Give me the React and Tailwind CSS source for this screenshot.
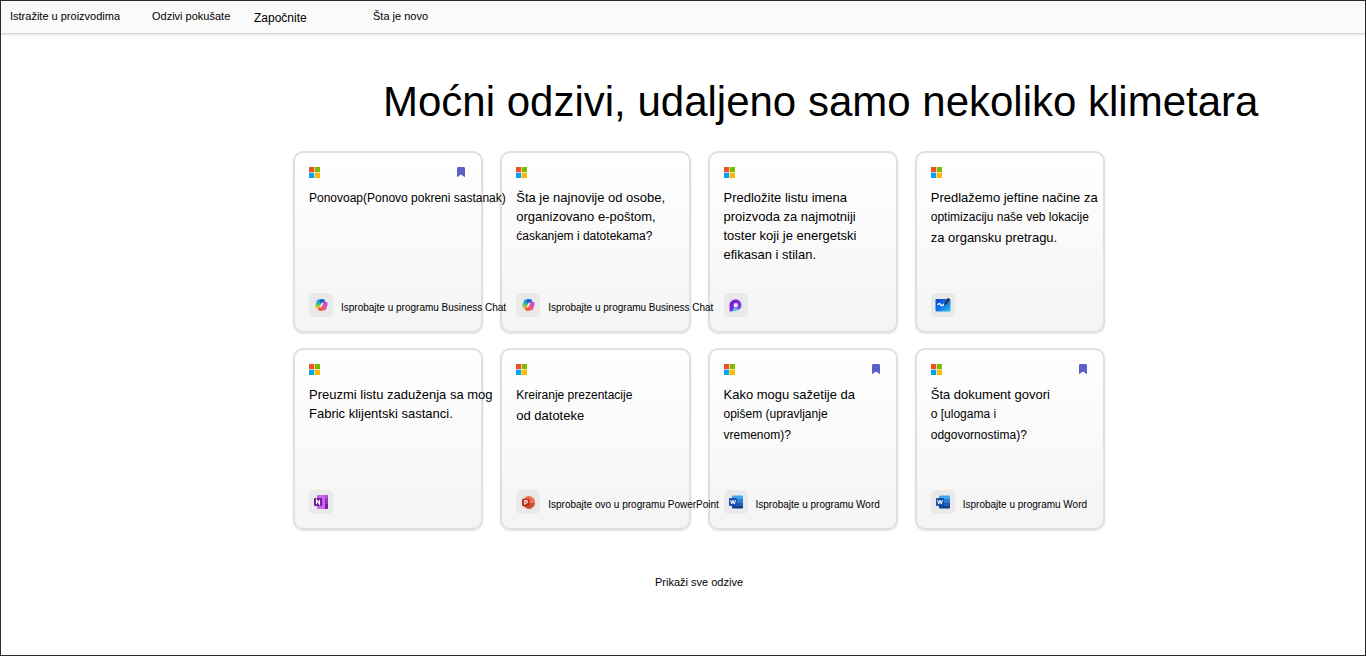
import React from "react";

function MicrosoftLogo() {
  return (
    <svg viewBox="0 0 11 11" className="size-[11px]" role="img" aria-label="Microsoft">
      <path fill="#f25022" d="M0 0h5.2v5.2H0z" />
      <path fill="#7fba00" d="M5.8 0H11v5.2H5.8z" />
      <path fill="#00a4ef" d="M0 5.8h5.2V11H0z" />
      <path fill="#ffb900" d="M5.8 5.8H11V11H5.8z" />
    </svg>
  );
}

function BookmarkIcon() {
  return (
    <svg viewBox="0 0 8 10" className="h-[10px] w-2" aria-hidden="true">
      <path fill="#5b5fc7" d="M1.4 0h5.2Q8 0 8 1.4V9.5q0 .8-.7.3L4 7.4.7 9.8Q0 10.3 0 9.5V1.4Q0 0 1.4 0z" />
    </svg>
  );
}

function CopilotIcon() {
  return (
    <svg viewBox="0 0 24 22" className="h-3 w-[13px]" aria-hidden="true">
      <defs>
        <linearGradient id="cp-a" x1="0" y1="0" x2="0" y2="1">
          <stop offset="0" stopColor="#1a8fe8" />
          <stop offset=".45" stopColor="#2bb7a0" />
          <stop offset=".75" stopColor="#a5cc36" />
          <stop offset="1" stopColor="#f5c518" />
        </linearGradient>
        <linearGradient id="cp-b" x1="1" y1="0" x2="0" y2="1">
          <stop offset="0" stopColor="#a153e8" />
          <stop offset=".5" stopColor="#ec4f9c" />
          <stop offset="1" stopColor="#ff8a3c" />
        </linearGradient>
      </defs>
      <path fill="url(#cp-a)" d="M7 1h10l-4 6h-1.500L8.500 17H4.500C1 17 0 14.500 1 11.500L3 5c.7-2.500 2-4 4-4z" />
      <path fill="#1a5fd0" d="M9 .5h6.500C17.500.5 18 2 18.500 4l.8 2.500H14c-2 0-2.500 1-3 2.500L8.500 6z" />
      <path fill="url(#cp-b)" d="M17 21H8l3-6h1.500l3-10h4C23 5 24 7.500 23 10.500L21 17c-.7 2.500-2 4-4 4z" />
      <path fill="#f15a3a" d="M14 21.500H8.500c-2 0-2.500-1-3-3.500l-.8-2H10c2 0 2.500-1 3-2.500l2 2.500z" />
    </svg>
  );
}

function DesignerIcon() {
  return (
    <svg viewBox="0 0 24 24" className="size-[13px]" aria-hidden="true">
      <defs>
        <linearGradient id="ds-a" x1="0" y1="0" x2="1" y2="1">
          <stop offset="0" stopColor="#5a17c8" />
          <stop offset=".55" stopColor="#8a2be2" />
          <stop offset="1" stopColor="#6a5cf0" />
        </linearGradient>
      </defs>
      <path
        fill="url(#ds-a)"
        fillRule="evenodd"
        d="M12.500 1C19 1 23 5.500 23 11.500S18.500 21 12 21l-9 2c-1.500 0-2-.8-2-2V12C1 5.500 6 1 12.500 1zm0 6.500a4 4 0 1 0 0 8 4 4 0 0 0 0-8z"
      />
      <path fill="#45c8f5" d="M9.500 15.500c3 1 6 1 8.500 3.500-2 1.800-4 2.500-7 2.800L4 23c2.500-1 4-3.500 5.500-7.500z" />
    </svg>
  );
}

function WhiteboardIcon() {
  return (
    <svg viewBox="0 0 16 16" className="size-4" aria-hidden="true">
      <defs>
        <linearGradient id="wb-a" x1="0" y1="0" x2="1" y2="1">
          <stop offset="0" stopColor="#0b3fd0" />
          <stop offset=".5" stopColor="#1273e8" />
          <stop offset="1" stopColor="#27c9f0" />
        </linearGradient>
      </defs>
      <rect x=".5" y="2" width="15" height="12.5" rx="1" fill="url(#wb-a)" />
      <path fill="none" stroke="#fff" strokeWidth="1.3" strokeLinecap="round" d="M3 7.500c1.600-1.800 2.200-.5 3 .5s1.800.8 3-.8" />
      <path fill="#2f3033" d="M9 8.500l.6-2.300L13 .8l2 1.500-3.600 5z" />
    </svg>
  );
}

function OneNoteIcon() {
  return (
    <svg viewBox="0 0 14 14" className="size-[14px]" aria-hidden="true">
      <rect x="3" y="0" width="11" height="14" rx="1" fill="#ca64ea" />
      <path fill="#ae4bd5" d="M11 0h2q1 0 1 1v3h-3z" />
      <path fill="#9332bf" d="M11 4h3v5h-3z" />
      <path fill="#7719aa" d="M11 9h3v4q0 1-1 1h-2z" />
      <rect x="0" y="3" width="8" height="8" rx=".8" fill="#6b1a9c" />
      <path fill="none" stroke="#fff" strokeWidth="1.2" d="M2.500 9.200V4.900l3 4.200V4.800" />
    </svg>
  );
}

function PowerPointIcon() {
  return (
    <svg viewBox="0 0 14 14" className="size-[13px]" aria-hidden="true">
      <path fill="#ed6c47" d="M7.500 0v7H1A6.600 6.600 0 0 1 7.500 0z" />
      <path fill="#ec7450" d="M7.500 0A6.800 6.800 0 0 1 14 7H7.500z" />
      <path fill="#d35230" d="M1 7h13A6.700 6.700 0 0 1 7.500 14 6.700 6.700 0 0 1 1 7z" />
      <rect x="0" y="3" width="8" height="8" rx=".8" fill="#b7341c" />
      <path fill="none" stroke="#fff" strokeWidth="1.1" d="M3 9.500V4.800h1.400q1.500 0 1.500 1.400T4.300 7.700H3" />
    </svg>
  );
}

function WordIcon() {
  return (
    <svg viewBox="0 0 14 14" className="size-[14px]" aria-hidden="true">
      <path fill="#41a5ee" d="M4 .5h9q1 0 1 1V4H3V1.500q0-1 1-1z" />
      <path fill="#2b7cd3" d="M3 4h11v3.200H3z" />
      <path fill="#185abd" d="M3 7.200h11v3H3z" />
      <path fill="#103f91" d="M3 10.200h11v2.300q0 1-1 1H4q-1 0-1-1z" />
      <rect x="0" y="3" width="8" height="8" rx=".8" fill="#1850b0" />
      <path fill="none" stroke="#fff" strokeWidth="1" d="M1.600 5l1.100 4L4 5.300 5.300 9l1.100-4" />
    </svg>
  );
}

const base = "text-[13px] leading-[19px]";
const small = "text-[12px] leading-[21px]";

const cards = [
  {
    lines: [["Ponovoap(Ponovo pokreni sastanak)", small]],
    icon: CopilotIcon, app: "Business Chat", action: "Isprobajte u programu Business Chat", saved: true,
  },
  {
    lines: [["Šta je najnovije od osobe,", base], ["organizovano e-poštom,", base], ["ćaskanjem i datotekama?", small]],
    icon: CopilotIcon, app: "Business Chat", action: "Isprobajte u programu Business Chat",
  },
  {
    lines: [["Predložite listu imena", base], ["proizvoda za najmotniji", base], ["toster koji je energetski", base], ["efikasan i stilan.", base]],
    icon: DesignerIcon, app: "Designer",
  },
  {
    lines: [["Predlažemo jeftine načine za", base], ["optimizaciju naše veb lokacije", small], ["za organsku pretragu.", base]],
    icon: WhiteboardIcon, app: "Whiteboard",
  },
  {
    lines: [["Preuzmi listu zaduženja sa mog", base], ["Fabric klijentski sastanci.", base]],
    icon: OneNoteIcon, app: "OneNote",
  },
  {
    lines: [["Kreiranje prezentacije", small], ["od datoteke", base]],
    icon: PowerPointIcon, app: "PowerPoint", action: "Isprobajte ovo u programu PowerPoint",
  },
  {
    lines: [["Kako mogu sažetije da", base], ["opišem (upravljanje", small], ["vremenom)?", small]],
    icon: WordIcon, app: "Word", action: "Isprobajte u programu Word", saved: true,
  },
  {
    lines: [["Šta dokument govori", base], ["o [ulogama i", small], ["odgovornostima)?", small]],
    icon: WordIcon, app: "Word", action: "Isprobajte u programu Word", saved: true,
  },
];

function PromptCard({ lines, icon: Icon, app, action, saved }) {
  return (
    <article className="flex min-h-[182px] min-w-0 flex-col rounded-[10px] border-2 border-[#e0e0e0] bg-linear-to-b from-white to-[#f4f4f4] p-[14px] shadow-[0_1px_2px_rgba(0,0,0,0.12)]">
      <div className="flex h-[11px] items-start justify-between">
        <MicrosoftLogo />
        {saved && (
          <button type="button" aria-label="Obeleživač" className="mr-[2px] flex">
            <BookmarkIcon />
          </button>
        )}
      </div>
      <h2 className="relative z-10 mt-[10px] flex flex-col whitespace-nowrap">
        {lines.map(([text, size]) => (
          <span key={text} className={size}>{text}</span>
        ))}
      </h2>
      <a href="#" aria-label={action ? undefined : app} className="relative z-10 mt-auto flex items-center gap-2 text-[10px] leading-4 whitespace-nowrap">
        <span className="flex size-6 shrink-0 items-center justify-center rounded-[5px] bg-[#e9e9e9]">
          <Icon />
        </span>
        {action && <span className="pt-[6px]">{action}</span>}
      </a>
    </article>
  );
}

export default function App() {
  return (
    <div className="flex min-h-screen flex-col overflow-x-hidden border border-[#2b2b2b] bg-white font-['Liberation_Sans',Arial,sans-serif] text-black">
      <nav className="flex h-[33px] items-center border-b border-[#d6d6d6] bg-[#fafafa] px-[9px] pb-[2px] text-[11px] leading-4 whitespace-nowrap shadow-[0_1px_2px_rgba(0,0,0,0.1)]">
        <a href="#" className="w-[142px]">Istražite u proizvodima</a>
        <a href="#" className="w-[102px]">Odzivi pokušate</a>
        <a href="#" className="w-[119px] pt-1 text-[12px]">Započnite</a>
        <a href="#">Šta je novo</a>
      </nav>
      <main className="mx-auto flex w-full max-w-[844px] flex-col pt-[42px] pb-8 pl-8">
        <h1 className="pl-[90px] text-[42px] leading-[52px] whitespace-nowrap">Moćni odzivi, udaljeno samo nekoliko klimetara</h1>
        <div className="mt-[23px] grid grid-cols-4 gap-x-[17px] gap-y-[15px]">
          {cards.map((card, i) => (
            <PromptCard key={i} {...card} />
          ))}
        </div>
        <a href="#" className="mt-11 self-center text-[11px] leading-4">Prikaži sve odzive</a>
      </main>
    </div>
  );
}
